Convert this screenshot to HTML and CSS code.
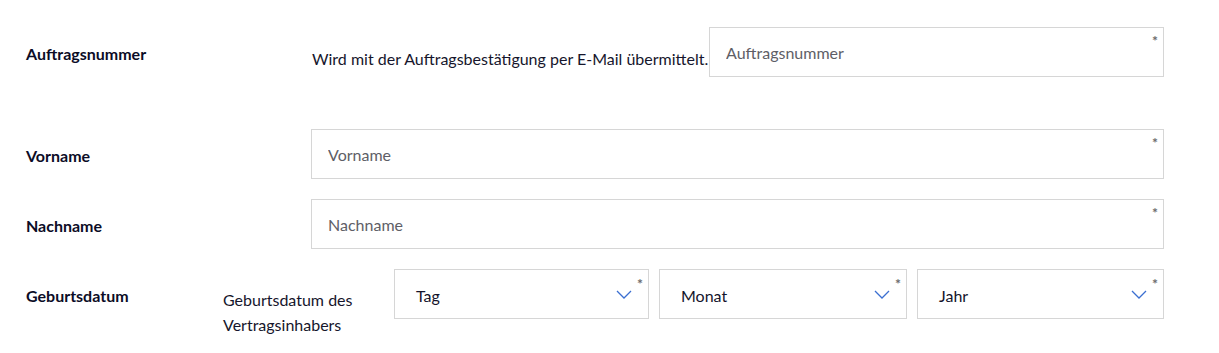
FILE: index.html
```html
<!DOCTYPE html>
<html lang="de">
<head>
<meta charset="utf-8">
<title>Formular</title>
<link rel="stylesheet" href="styles.css">
</head>
<body>
<form class="form">
  <div class="row row-order">
    <div class="label">Auftragsnummer</div>
    <div class="hint hint-order">Wird mit der Auftragsbestätigung per E-Mail übermittelt.</div>
    <div class="field field-order">
      <input class="input" type="text" placeholder="Auftragsnummer">
      <span class="req">*</span>
    </div>
  </div>
  <div class="row row-name">
    <div class="label label-wide">Vorname</div>
    <div class="field">
      <input class="input" type="text" placeholder="Vorname">
      <span class="req">*</span>
    </div>
  </div>
  <div class="row row-name2">
    <div class="label label-wide">Nachname</div>
    <div class="field">
      <input class="input" type="text" placeholder="Nachname">
      <span class="req">*</span>
    </div>
  </div>
  <div class="row row-birth">
    <div class="label label-narrow">Geburtsdatum</div>
    <div class="hint hint-birth">Geburtsdatum des Vertragsinhabers</div>
    <div class="selects">
      <div class="select">
        <span class="select-text">Tag</span>
        <svg class="chev" width="16" height="9" viewBox="0 0 16 9"><path d="M1 1 L8 8 L15 1" fill="none" stroke="#3b6fd1" stroke-width="1.3"/></svg>
        <span class="req">*</span>
      </div>
      <div class="select">
        <span class="select-text">Monat</span>
        <svg class="chev" width="16" height="9" viewBox="0 0 16 9"><path d="M1 1 L8 8 L15 1" fill="none" stroke="#3b6fd1" stroke-width="1.3"/></svg>
        <span class="req">*</span>
      </div>
      <div class="select">
        <span class="select-text">Jahr</span>
        <svg class="chev" width="16" height="9" viewBox="0 0 16 9"><path d="M1 1 L8 8 L15 1" fill="none" stroke="#3b6fd1" stroke-width="1.3"/></svg>
        <span class="req">*</span>
      </div>
    </div>
  </div>
</form>
</body>
</html>
```

FILE: styles.css
```css
* { box-sizing: border-box; }
html, body { margin: 0; padding: 0; background: #fff; }
body {
  font-family: Lato, "Noto Sans", sans-serif;
  color: #14142b;
  width: 1219px;
  height: 353px;
  overflow: hidden;
}
.form {
  padding: 27px 55px 0 26px;
  display: flex;
  flex-direction: column;
}
.row {
  display: flex;
  align-items: center;
  height: 50px;
}
.row-name { margin-top: 52px; }
.row-name2 { margin-top: 20px; }
.row-birth { margin-top: 20px; align-items: flex-start; }
.label {
  font-weight: 700;
  font-size: 16px;
  color: #0c0c26;
  flex: none;
  padding-top: 3px;
}
.row-order .label { width: 286px; align-self: center; }
.label-wide { width: 285px; }
.label-narrow { width: 197px; align-self: center; }
.hint {
  font-size: 16px;
  color: #16162c;
  line-height: 25px;
}
.hint-order {
  flex: 1;
  padding-top: 13px;
  white-space: nowrap;
}
.hint-birth {
  width: 171px;
  flex: none;
  padding-top: 18px;
}
.field {
  position: relative;
  flex: 1;
  height: 50px;
}
.field-order { flex: none; width: 455px; }
.input {
  width: 100%;
  height: 50px;
  border: 1px solid #d6d6d6;
  padding: 0 16px;
  font-family: Lato, "Noto Sans", sans-serif;
  font-size: 16px;
  color: #14142b;
  outline: none;
  background: #fff;
}
.input::placeholder { color: #5e5e66; opacity: 1; }
.req {
  position: absolute;
  right: 6px;
  top: 7px;
  font-size: 14px;
  font-weight: 700;
  color: #6a6a6a;
  line-height: 14px;
}
.selects {
  flex: 1;
  display: grid;
  grid-template-columns: 255px 248px 1fr;
  column-gap: 10px;
}
.select {
  position: relative;
  height: 50px;
  border: 1px solid #d6d6d6;
  display: flex;
  align-items: center;
  padding: 0 16px 0 21px;
}
.select-text {
  flex: 1;
  font-size: 16px;
  color: #14142b;
  padding-top: 2px;
}
.chev { flex: none; display: block; }
.select .req { right: 5px; top: 7px; }
```
